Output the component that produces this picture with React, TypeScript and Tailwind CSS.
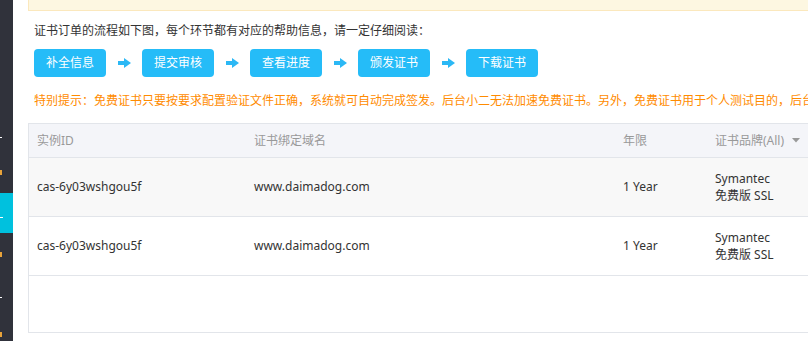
import React from "react";

const Arrow = () => (
  <svg width="13" height="10" viewBox="0 0 13 10" className="shrink-0">
    <rect x="0" y="3" width="7" height="4" fill="#2bb8f5" />
    <polygon points="6,0 13,5 6,10" fill="#2bb8f5" />
  </svg>
);

const steps = ["补全信息", "提交审核", "查看进度", "颁发证书", "下载证书"];

const rows = [
  { id: "cas-6y03wshgou5f", domain: "www.daimadog.com", year: "1 Year", bg: "bg-[#f8f8f8]" },
  { id: "cas-6y03wshgou5f", domain: "www.daimadog.com", year: "1 Year", bg: "bg-white" },
];

export default function App() {
  return (
    <div
      className="flex w-[808px] h-[341px] overflow-hidden bg-white text-[12px] text-[#333]"
      style={{ fontFamily: '"Noto Sans", "Noto Sans CJK SC", sans-serif' }}
    >
      <aside className="w-[13px] shrink-0 bg-[#30323b] flex flex-col">
        <div className="h-[193px] relative">
          <div className="absolute left-0 top-[137px] w-[2px] h-[1px] bg-white" />
          <div className="absolute left-0 top-[170px] w-[2px] h-[5px] bg-[#e8a33a]" />
        </div>
        <div className="h-[40px] bg-[#00c1de] relative">
          <div className="absolute left-0 top-[24px] w-[3px] h-[1px] bg-white" />
        </div>
        <div className="flex-1 relative">
          <div className="absolute left-0 top-[19px] w-[2px] h-[5px] bg-[#e8a33a]" />
          <div className="absolute left-0 top-[64px] w-[2px] h-[1px] bg-white" />
          <div className="absolute left-0 top-[99px] w-[2px] h-[5px] bg-[#e8a33a]" />
        </div>
      </aside>
      <main className="flex-1 min-w-0 pl-[15px] overflow-hidden">
        <div className="h-[11px] bg-[#fdf7e1] border-l border-b border-[#fbe8bd] overflow-hidden flex items-end w-[900px]">
          <div className="pl-[12px] leading-[12px] mb-[9px] whitespace-nowrap flex gap-[26px]">
            <span className="text-[#f5a04a]">提示：</span>
            <span className="text-[#2a7ad8]">证书申请后请及时完成验证</span>
            <span className="text-[#f5a04a]">否则订单将会关闭</span>
            <span className="text-[#f08a1a]">免费证书每个账号可申请多张请合理使用避免浪费</span>
          </div>
        </div>
        <div className="pl-[6px]">
          <p className="mt-[12px] leading-[16px]">证书订单的流程如下图，每个环节都有对应的帮助信息，请一定仔细阅读：</p>
          <div className="mt-[10px] flex items-center gap-[12px]">
            {steps.map((s, i) => (
              <React.Fragment key={s}>
                {i > 0 && (
                  <div className="w-[12px] flex justify-center">
                    <Arrow />
                  </div>
                )}
                <div className="w-[72px] h-[28px] rounded-[4px] bg-[#25bcf8] text-white text-[12px] flex items-center justify-center">
                  {s}
                </div>
              </React.Fragment>
            ))}
          </div>
          <p className="mt-[16px] leading-[16px] text-[#ff8b00] whitespace-nowrap">
            特别提示：免费证书只要按要求配置验证文件正确，系统就可自动完成签发。后台小二无法加速免费证书。另外，免费证书用于个人测试目的，后台小二不提供技术支持。
          </p>
        </div>
        <div className="mt-[14px] w-[900px] border-l border-t border-b border-[#e2e5ea] h-[210px]">
          <div className="flex h-[34px] items-center bg-[#f4f5f9] border-b border-[#e2e5ea] text-[#999]">
            <div className="w-[217px] pl-[8px]">实例ID</div>
            <div className="w-[369px] pl-[8px]">证书绑定域名</div>
            <div className="w-[92px] pl-[8px]">年限</div>
            <div className="flex-1 pl-[8px] flex items-center gap-[8px]">
              <span>证书品牌(All)</span>
              <svg width="8" height="5" viewBox="0 0 8 5">
                <polygon points="0,0 8,0 4,4.5" fill="#999" />
              </svg>
            </div>
          </div>
          {rows.map((r, i) => (
            <div key={i} className={`flex h-[59px] items-center border-b border-[#e2e5ea] ${r.bg}`}>
              <div className="w-[217px] pl-[8px]">{r.id}</div>
              <div className="w-[369px] pl-[8px]">{r.domain}</div>
              <div className="w-[92px] pl-[8px]">{r.year}</div>
              <div className="flex-1 pl-[8px] leading-[17px]">
                <div>Symantec</div>
                <div>免费版 SSL</div>
              </div>
            </div>
          ))}
        </div>
      </main>
    </div>
  );
}
